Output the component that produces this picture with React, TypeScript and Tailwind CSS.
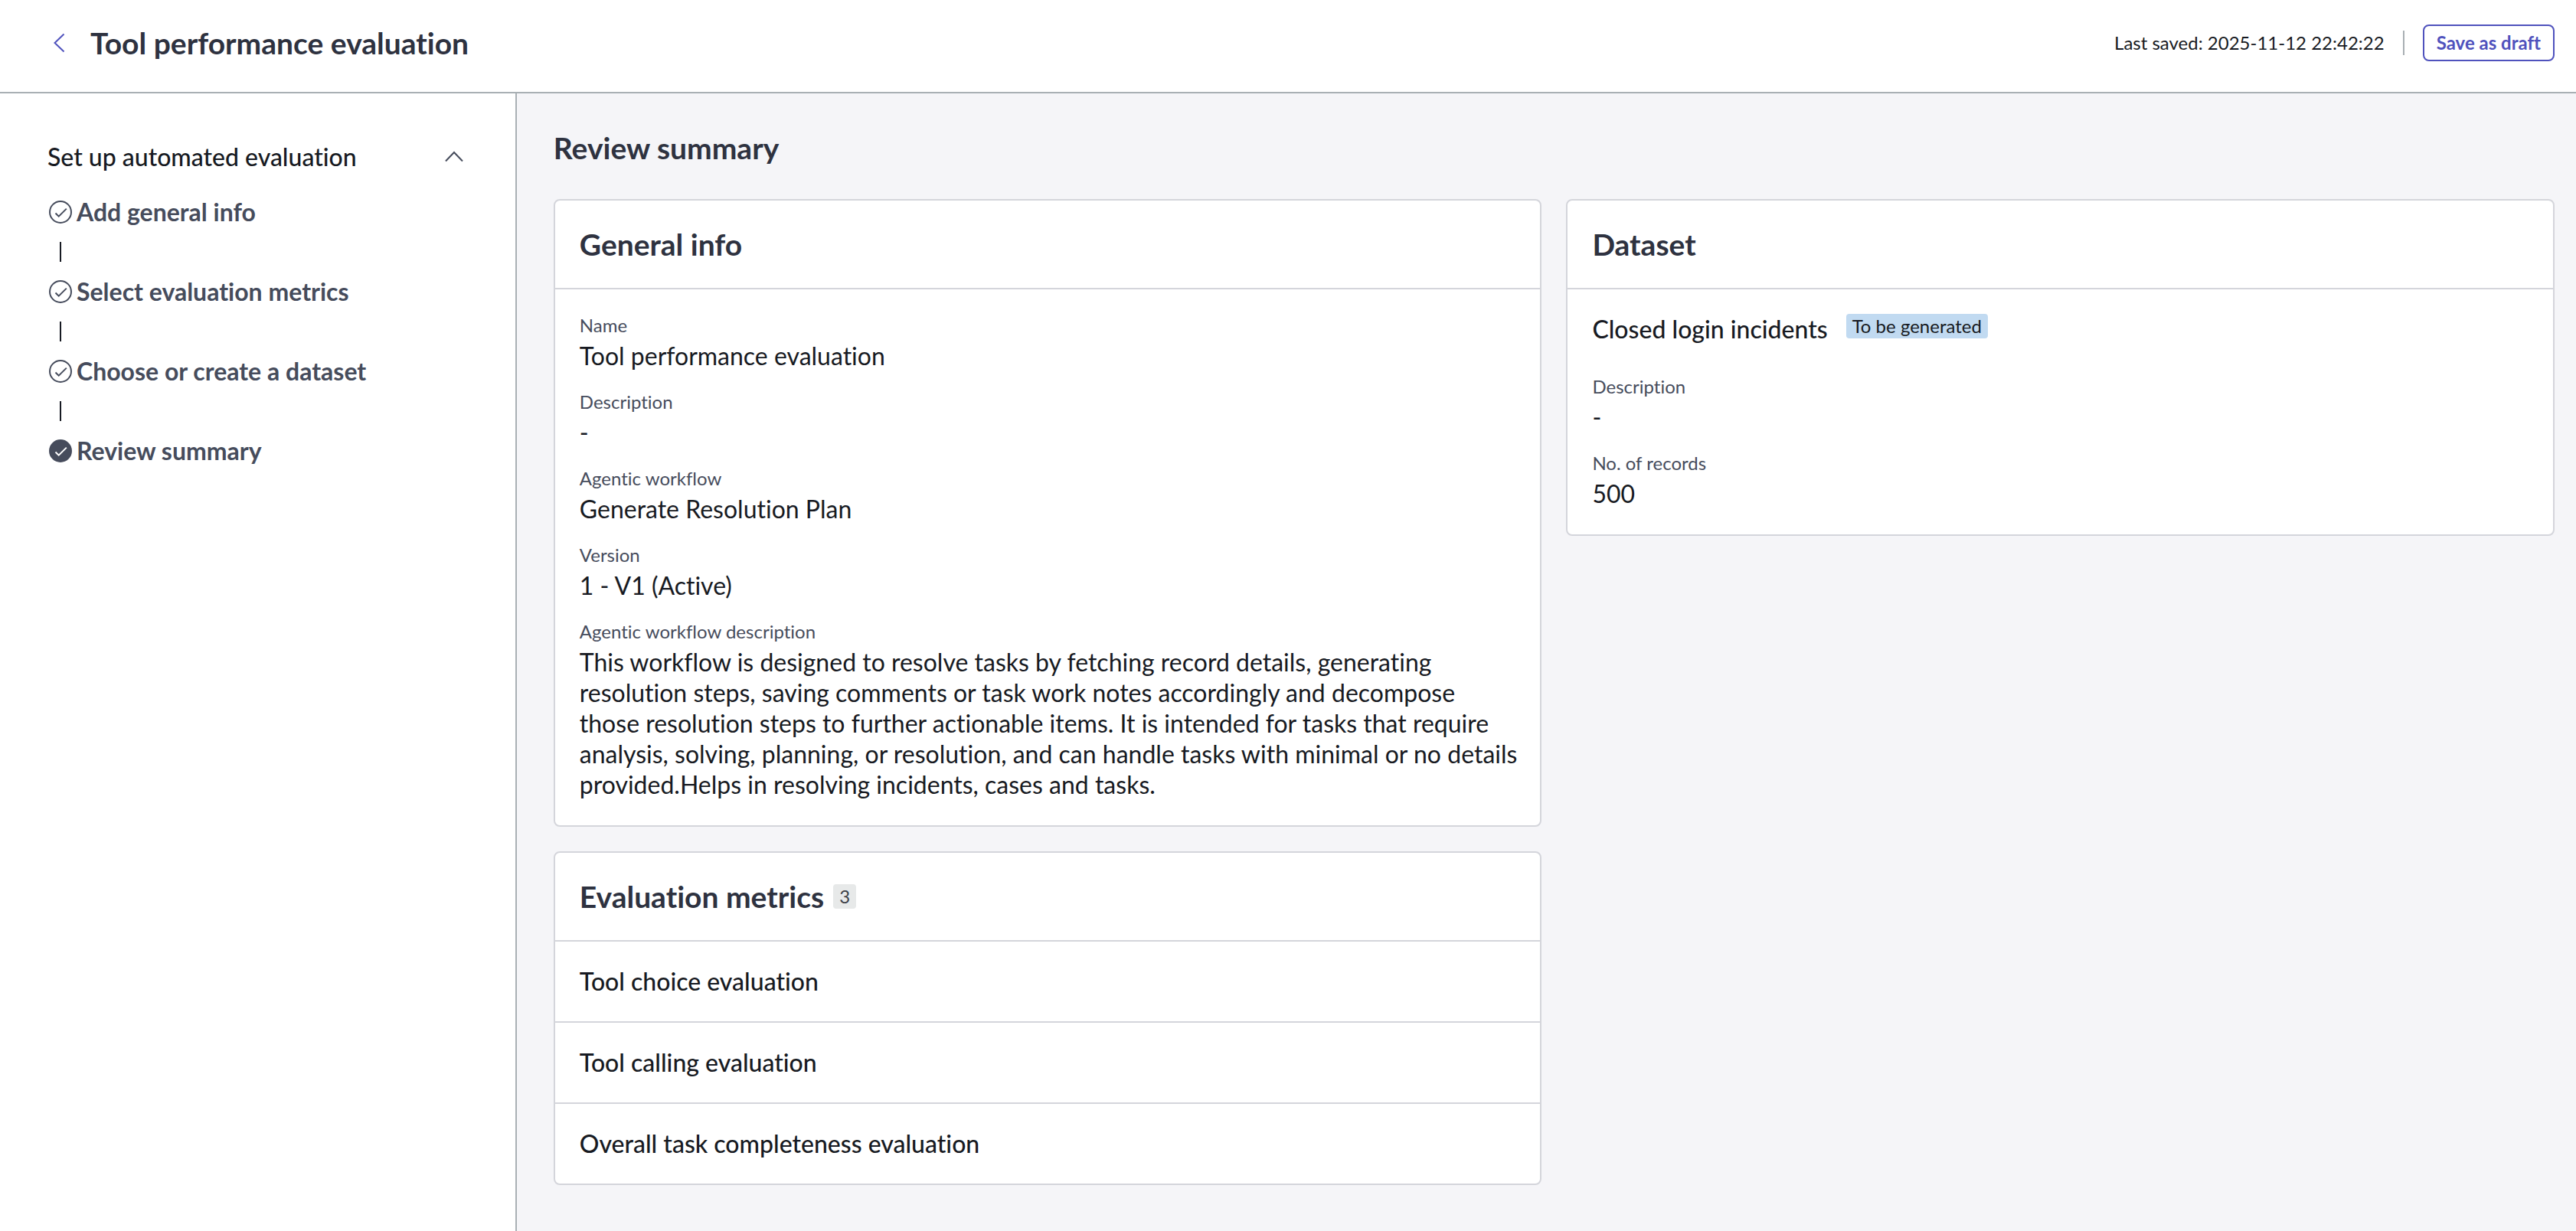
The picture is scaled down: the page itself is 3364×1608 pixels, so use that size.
import React from 'react';

const steps = [
  { label: 'Add general info', current: false },
  { label: 'Select evaluation metrics', current: false },
  { label: 'Choose or create a dataset', current: false },
  { label: 'Review summary', current: true },
];

const metrics = ['Tool choice evaluation', 'Tool calling evaluation', 'Overall task completeness evaluation'];

const StepIcon: React.FC<{ filled: boolean }> = ({ filled }) => (
  <svg className="size-[30px] shrink-0" viewBox="0 0 30 30" fill="none" aria-hidden="true">
    <circle cx="15" cy="15" r="14" fill={filled ? '#464c5c' : 'none'} stroke="#464c5c" strokeWidth="2" />
    <path d="M8.5 16.5 12.7 20.7 22.8 10.6" stroke={filled ? '#ffffff' : '#464c5c'} strokeWidth="2" />
  </svg>
);

const Card: React.FC<{ title: string; count?: number; children: React.ReactNode }> = ({ title, count, children }) => (
  <section className="rounded-lg border-2 border-[#d4d5db] bg-white">
    <div className="flex h-[116px] items-center gap-3 border-b-2 border-[#d4d5db] px-8">
      <h3 className="text-[39px] leading-[46px] font-bold text-[#2e3240]">{title}</h3>
      {count !== undefined && (
        <span className="rounded-sm bg-[#e7e9e9] px-2 text-2xl leading-8 text-[#3e4248]">{count}</span>
      )}
    </div>
    {children}
  </section>
);

const Field: React.FC<{ label: string; value: string }> = ({ label, value }) => (
  <div>
    <dt className="text-2xl leading-[30px] text-[#464c5c]">{label}</dt>
    <dd className="mt-[5px] text-[32px] leading-10">{value}</dd>
  </div>
);

export default function App() {
  return (
    <div className="flex min-h-screen flex-col bg-white font-['Lato',sans-serif] text-[#171a22] [font-variant-ligatures:none]">
      {/* Header */}
      <header className="flex items-start justify-between border-b-2 border-[#a9b0b4] pt-8 pr-7 pb-10 pl-15">
        <div className="flex h-12 items-center gap-[26px]">
          <button type="button" aria-label="Back">
            <svg className="size-8" viewBox="0 0 32 32" fill="none" aria-hidden="true">
              <path d="M23.5 4.5 11.5 16 23.5 27.5" stroke="#4f52bd" strokeWidth="2" />
            </svg>
          </button>
          <h1 className="text-[39px] leading-[46px] font-bold text-[#2e3240]">Tool performance evaluation</h1>
        </div>
        <div className="flex h-12 items-center gap-6">
          <p className="text-2xl">Last saved: 2025-11-12 22:42:22</p>
          <span className="h-8 w-0.5 bg-[#a9b0b4]" />
          <button type="button" className="h-12 rounded-lg border-2 border-[#4f52bd] px-4 text-2xl leading-none font-bold text-[#4f52bd]">
            Save as draft
          </button>
        </div>
      </header>

      <div className="flex grow">
        {/* Sidebar */}
        <nav className="box-content w-1/5 shrink-0 border-r-2 border-[#a9b0b4]">
          <div className="flex flex-col gap-8 pt-[63px] pr-16 pl-[62px]">
            <button type="button" className="flex h-10 items-center justify-between text-[32px] leading-10 font-medium" aria-expanded="true">
              Set up automated evaluation
              <svg className="size-8" viewBox="0 0 32 32" fill="none" aria-hidden="true">
                <path d="M5 21.5 16 10 27 21.5" stroke="#464c5c" strokeWidth="2" />
              </svg>
            </button>
            <ol className="pl-0.5">
              {steps.map((step, i) => (
                <li key={step.label}>
                  {i > 0 && <div className="my-[19px] ml-3.5 h-[26px] w-0.5 bg-[#171a22]" />}
                  <a href="#" className="flex items-center gap-1.5 text-[32px] leading-10 font-bold text-[#464c5c]" aria-current={step.current ? 'step' : undefined}>
                    <StepIcon filled={step.current} />
                    {step.label}
                  </a>
                </li>
              ))}
            </ol>
          </div>
        </nav>

        {/* Summary */}
        <main className="grow bg-[#f5f5f8] pt-12 pr-7 pb-15 pl-12">
          <h2 className="text-[39px] leading-[46px] font-bold text-[#2e3240]">Review summary</h2>
          <div className="mt-11 grid grid-cols-2 items-start gap-8">
            <div className="flex flex-col gap-8">
              <Card title="General info">
                <dl className="flex flex-col gap-[25px] pt-8 pr-7 pb-[33px] pl-8">
                  <Field label="Name" value="Tool performance evaluation" />
                  <Field label="Description" value="-" />
                  <Field label="Agentic workflow" value="Generate Resolution Plan" />
                  <Field label="Version" value="1 - V1 (Active)" />
                  <Field
                    label="Agentic workflow description"
                    value="This workflow is designed to resolve tasks by fetching record details, generating resolution steps, saving comments or task work notes accordingly and decompose those resolution steps to further actionable items. It is intended for tasks that require analysis, solving, planning, or resolution, and can handle tasks with minimal or no details provided.Helps in resolving incidents, cases and tasks."
                  />
                </dl>
              </Card>
              <Card title="Evaluation metrics" count={metrics.length}>
                <ul className="divide-y-2 divide-[#d4d5db]">
                  {metrics.map((metric) => (
                    <li key={metric} className="px-8 py-8 text-[32px] leading-10 font-medium">{metric}</li>
                  ))}
                </ul>
              </Card>
            </div>
            <Card title="Dataset">
              <div className="px-8 pt-8 pb-[33px]">
                <div className="flex items-start gap-6">
                  <h4 className="text-[32px] leading-10 font-medium">Closed login incidents</h4>
                  <span className="rounded-sm bg-[#c1daf1] px-2 text-2xl leading-8">To be generated</span>
                </div>
                <dl className="mt-10 flex flex-col gap-[25px]">
                  <Field label="Description" value="-" />
                  <Field label="No. of records" value="500" />
                </dl>
              </div>
            </Card>
          </div>
        </main>
      </div>
    </div>
  );
}
